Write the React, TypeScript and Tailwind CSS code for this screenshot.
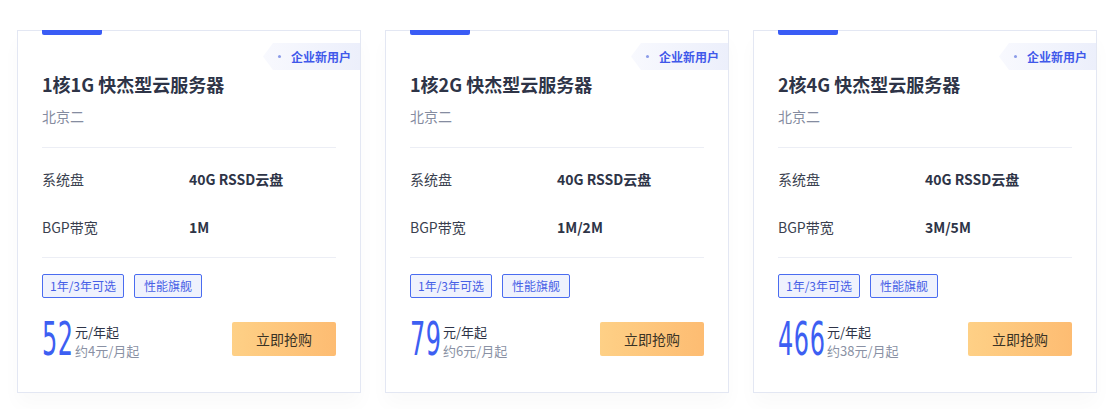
import React from 'react';

type Plan = {
  title: string;
  bandwidth: string;
  price: string;
  monthly: string;
  numW: string;
};

const plans: Plan[] = [
  { title: '1核1G 快杰型云服务器', bandwidth: '1M', price: '52', monthly: '约4元/月起', numW: 'w-[31px]' },
  { title: '1核2G 快杰型云服务器', bandwidth: '1M/2M', price: '79', monthly: '约6元/月起', numW: 'w-[31px]' },
  { title: '2核4G 快杰型云服务器', bandwidth: '3M/5M', price: '466', monthly: '约38元/月起', numW: 'w-[47px]' },
];

const font = "font-['Noto_Sans_CJK_SC','Noto_Sans',sans-serif]";

function PlanCard({ plan }: { plan: Plan }) {
  return (
    <div className="relative w-[344px] h-[363px] bg-white border border-[#e3e7f3] shadow-[0_12px_18px_rgba(0,0,0,0.025)]">
      <div className="absolute -top-px left-[24px] w-[60px] h-[5px] bg-[#3a5cf5] rounded-b-[2px]" />

      <div className="absolute right-0 top-[12px] h-[27px] w-[97px] flex items-center bg-gradient-to-r from-[#f8f9fe] to-[#eceffb] [clip-path:polygon(10px_0,100%_0,100%_100%,10px_100%,0_50%)]">
        <span className="ml-[15px] w-[3px] h-[3px] rounded-full bg-[#8b9be8]" />
        <span className="ml-[10px] text-[12px] font-bold text-[#4058ea] leading-none">企业新用户</span>
      </div>

      <div className="px-[24px] pt-[41px]">
        <h3 className="text-[18px] leading-[24px] font-bold text-[#2e3447]">{plan.title}</h3>
        <p className="mt-[10px] text-[14px] leading-[20px] text-[#858ca0]">北京二</p>

        <div className="mt-[21px] border-t border-[#eceef5]" />

        <div className="flex items-center h-[48px] mt-[7px] text-[14px] leading-[20px]">
          <span className="w-[147px] text-[#3a3f4f]">系统盘</span>
          <span className="font-bold text-[#2e3447]">40G RSSD云盘</span>
        </div>
        <div className="flex items-center h-[48px] text-[14px] leading-[20px]">
          <span className="w-[147px] text-[#3a3f4f]">BGP带宽</span>
          <span className="font-bold text-[#2e3447]">{plan.bandwidth}</span>
        </div>

        <div className="mt-[6px] border-t border-[#eceef5]" />

        <div className="flex gap-[10px] mt-[16px]">
          <span className="h-[24px] px-[7px] flex items-center border border-[#4a6cf0] rounded-[2px] bg-[#eff2fd] text-[12px] text-[#4760e6]">1年/3年可选</span>
          <span className="h-[24px] px-[9px] flex items-center border border-[#4a6cf0] rounded-[2px] bg-[#eff2fd] text-[12px] text-[#4760e6]">性能旗舰</span>
        </div>

        <div className="flex items-center justify-between mt-[22px]">
          <div className="flex items-end">
            <div className={`${plan.numW} h-[38px] overflow-visible`}>
              <span className="inline-block origin-left scale-x-[0.58] font-['DejaVu_Sans_Condensed','DejaVu_Sans',sans-serif] text-[46px] leading-[38px] text-[#3d5ff2] tracking-[1px]">
                {plan.price}
              </span>
            </div>
            <div className="ml-[2px] flex flex-col mb-[-2px]">
              <span className="text-[13px] leading-[19px] text-[#2e3447]">元/年起</span>
              <span className="text-[13px] leading-[19px] text-[#8a91a4]">{plan.monthly}</span>
            </div>
          </div>
          <button className="w-[104px] h-[34px] rounded-[2px] bg-gradient-to-r from-[#fed086] to-[#fdbc72] text-[14px] text-[#3a3325]">
            立即抢购
          </button>
        </div>
      </div>
    </div>
  );
}

export default function App() {
  return (
    <div className={`${font} w-[1115px] h-[409px] bg-white pt-[30px] pl-[17px] flex gap-[24px]`}>
      {plans.map((p) => (
        <PlanCard key={p.title} plan={p} />
      ))}
    </div>
  );
}
